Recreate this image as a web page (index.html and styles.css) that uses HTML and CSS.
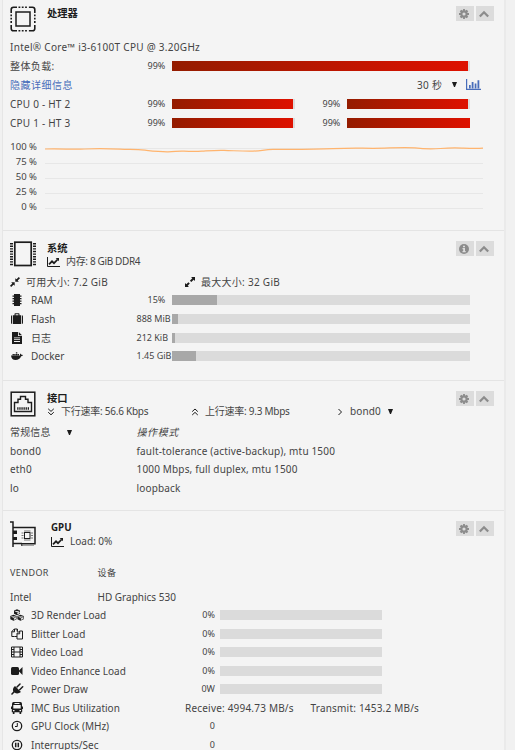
FILE: index.html
```html
<!DOCTYPE html>
<html lang="zh">
<head>
	<meta charset="utf-8">
	<title>Dashboard</title>
	<link rel="stylesheet" href="styles.css">
</head>
<body>
	<svg class="defs">
		<symbol id="cog" viewBox="0 0 12 12"><path fill-rule="evenodd" d="M4.900 0h2.200v1.500l1 .4 1.100-1.100 1.900 1.900L10 3.800l.4 1.100H12v2.200h-1.600L10 8.200l1.100 1.100-1.900 1.900-1.100-1.100-1 .4V12H4.900v-1.500l-1-.4-1.100 1.100L.9 9.300 2 8.200l-.4-1.100H0V4.900h1.600L2 3.800.9 2.700 2.800.8l1.100 1.100 1-.4zM6 4.100a1.900 1.900 0 1 0 0 3.800 1.900 1.900 0 0 0 0-3.800z"/></symbol>
		<symbol id="up" viewBox="0 0 10 10"><path d="M.8 7.500 5 3.300l4.200 4.200" fill="none" stroke="currentColor" stroke-width="2.300"/></symbol>
		<symbol id="info" viewBox="0 0 10 10"><circle cx="5" cy="5" r="5"/><path d="M4 1.700h2v1.500H4zM3.500 4H6v3h.7v1.200H3.500V7h.7V5.200h-.7z" fill="#dcdcdc"/></symbol>
		<symbol id="line-chart" viewBox="0 0 13 10"><path d="M.5 0v9.500H13" fill="none" stroke="currentColor"/><path d="M2 7.300 5 4.300l2 1.900 3.600-3.700" fill="none" stroke="currentColor" stroke-width="1.700"/><path d="M8.700 1H12v3.300z"/></symbol>
	</svg>

	<div class="panel">
		<section class="cpu">
			<div class="head">
				<svg class="logo" viewBox="0 0 26 26"><rect x="6" y="6" width="14" height="14" fill="none" stroke="currentColor" stroke-width="1.500"/><path d="M1.200 7V3.500q0-2.300 2.300-2.300H7M19 1.200h3.500q2.300 0 2.300 2.300V7M24.800 19v3.500q0 2.300-2.300 2.300H19M7 24.800H3.500q-2.300 0-2.300-2.300V19" fill="none" stroke="currentColor" stroke-width="1.600"/><path d="M8.500 1.200h10M8.500 24.800h10M1.200 8.500v10M24.800 8.500v10" fill="none" stroke="currentColor" stroke-width="1.600" stroke-dasharray="1.800 1.500"/></svg>
				<div class="titles"><h2>处理器</h2></div>
				<div class="tools"><span><svg><use href="#cog"/></svg></span><span><svg><use href="#up"/></svg></span></div>
			</div>
			<div class="row model">Intel® Core™ i3-6100T CPU @ 3.20GHz</div>
			<div class="row load"><span>整体负载:</span><em>99%</em><div class="bar"><i class="red" style="width:99.300%"></i></div></div>
			<div class="row detail"><a>隐藏详细信息</a><span class="time">30 秒</span><b class="caret"></b>
				<svg class="bars" viewBox="0 0 15 11"><path d="M.6 0v10.400H15" fill="none" stroke="currentColor" stroke-width="1.200"/><path d="M3 6h1.700v3.500H3zM5.700 3h1.800v6.500H5.700zM8.700 4.500h1.700v5H8.700zM11.500 1.200h1.800v8.300h-1.800z"/></svg>
			</div>
			<div class="row core"><span>CPU 0 - HT 2</span><em>99%</em><div class="bar"><i class="red" style="width:98.500%"></i></div><em>99%</em><div class="bar"><i class="red" style="width:98.500%"></i></div></div>
			<div class="row core"><span>CPU 1 - HT 3</span><em>99%</em><div class="bar"><i class="red" style="width:98.500%"></i></div><em>99%</em><div class="bar"><i class="red" style="width:100%"></i></div></div>
			<div class="chart">
				<div class="labels"><span>100 %</span><span>75 %</span><span>50 %</span><span>25 %</span><span>0 %</span></div>
				<svg viewBox="0 0 438 64"><path d="M0 1.500h438M0 16.500h438M0 31.500h438M0 46.500h438M0 61.500h438" stroke="#e7e7e7" fill="none"/><path d="M0 2C20 1.500 25 2.700 40 2S65 1.700 75 2.200s15-.1 25 1 15 1.700 23 1.600 8-.8 16-.6 10 .5 18 0 13-1 22-.8 15 .8 26 .8 13-1.600 23-1.800c25 0 40 .2 60-.7s25-.4 40-.4 28-1.200 42-.4c8 1 15 1.400 25.500.6s15-.7 21.500-.4 15 .8 22-.1" stroke="#ffb46e" stroke-width="1.200" fill="none"/></svg>
			</div>
		</section>

		<section class="system">
			<div class="head">
				<svg class="logo" viewBox="0 0 26 26"><rect x="4.800" y="1.200" width="16.400" height="23.300" fill="none" stroke="currentColor" stroke-width="1.700"/><path d="M1.500 2v22.500M24.500 2v22.500" stroke="currentColor" stroke-width="3" stroke-dasharray="1.400 1.200"/></svg>
				<div class="titles"><h2>系统</h2><p><svg class="lc"><use href="#line-chart"/></svg>内存: 8 GiB DDR4</p></div>
				<div class="tools"><span><svg><use href="#info"/></svg></span><span><svg><use href="#up"/></svg></span></div>
			</div>
			<div class="row sizes">
				<svg viewBox="0 0 10 10"><path d="M5.300 4.700V1.200l1.200 1.100L8.800 0 10 1.200 7.700 3.500l1.100 1.200zM4.700 5.300v3.500L3.500 7.700 1.200 10 0 8.800l2.300-2.300-1.100-1.200z"/></svg><span>可用大小: 7.2 GiB</span>
				<svg viewBox="0 0 10 10"><path d="M6 0h4v4L8.700 2.700 6.300 5.100 4.900 3.700l2.400-2.400zM4 10H0V6l1.300 1.300 2.100-2.100 1.400 1.400-2.100 2.100z"/></svg><span>最大大小: 32 GiB</span>
			</div>
			<div class="row use"><svg viewBox="0 0 12 12"><path d="M3 0h6v12H3zM1.500 1.500h9v1.300h-9zM1.500 4h9v1.300h-9zM1.500 6.500h9v1.300h-9zM1.500 9h9v1.300h-9z"/></svg><span>RAM</span><em class="pct">15%</em><div class="bar"><i style="width:15%"></i></div></div>
			<div class="row use"><svg viewBox="0 0 12 12"><path d="M0 3.500Q0 2.300 1.200 2.300V11Q0 11 0 9.800zM10.800 2.300Q12 2.300 12 3.500v6.300Q12 11 10.800 11zM2 2.300h1.500V1q0-.8.8-.8h3.400q.8 0 .8.800v1.300H10V11H2zM4.600 1.300v1h2.800v-1z"/></svg><span>Flash</span><em>888 MiB</em><div class="bar"><i style="width:2%"></i></div></div>
			<div class="row use"><svg viewBox="0 0 12 12"><path fill-rule="evenodd" d="M1 0h6v4h4v8H1zM3 5.500v.8h6v-.8zM3 7.300v.8h6v-.8zM3 9.100v.8h6v-.8zM7.800 0 11 3.200H7.800z"/></svg><span>日志</span><em>212 KiB</em><div class="bar"><i style="width:1%"></i></div></div>
			<div class="row use"><svg viewBox="0 0 12 12"><path d="M0 5.500h9q-.3-1.200.5-2 .7.500.8 1.300 1-.2 1.700.2-.6 1.200-1.900 1.200Q8.600 10 4.500 10 .6 10 0 5.500zM1.500 4h1.400v1.200H1.500zM3.200 4h1.400v1.200H3.200zM4.900 4h1.400v1.200H4.900zM6.600 4H8v1.200H6.600zM4.900 2.300h1.400v1.300H4.900z"/></svg><span>Docker</span><em>1.45 GiB</em><div class="bar"><i style="width:8%"></i></div></div>
		</section>

		<section class="network">
			<div class="head">
				<svg class="logo" viewBox="0 0 26 26"><rect x="1.200" y="1.200" width="23.600" height="23.600" fill="none" stroke="currentColor" stroke-width="1.500"/><path d="M4.500 20.500v-9H8V8.300h2.500V5.500h5v2.800H18v3.200h3.500v9z" fill="none" stroke="currentColor" stroke-width="1.400"/><path d="M7.200 17.500h12" stroke="currentColor" stroke-width="2.600" stroke-dasharray="1.300 .8"/></svg>
				<div class="titles"><h2>接口</h2><p class="rates"><svg viewBox="0 0 8 8"><path d="M1.200.8 4 3.400 6.800.8M1.200 4.200 4 6.800l2.800-2.600" fill="none" stroke="currentColor"/></svg><span>下行速率: 56.6 Kbps</span><svg viewBox="0 0 8 8"><path d="M1.200 3.600 4 1l2.800 2.600M1.200 7 4 4.400 6.800 7" fill="none" stroke="currentColor"/></svg><span>上行速率: 9.3 Mbps</span><svg viewBox="0 0 8 8"><path d="M2.500 1 5.500 4l-3 3" fill="none" stroke="currentColor"/></svg><span>bond0</span><b class="caret"></b></p></div>
				<div class="tools"><span><svg><use href="#cog"/></svg></span><span><svg><use href="#up"/></svg></span></div>
			</div>
			<div class="row net"><span>常规信息<b class="caret"></b></span><span class="mode">操作模式</span></div>
			<div class="row net"><span>bond0</span><span>fault-tolerance (active-backup), mtu 1500</span></div>
			<div class="row net"><span>eth0</span><span>1000 Mbps, full duplex, mtu 1500</span></div>
			<div class="row net"><span>lo</span><span>loopback</span></div>
		</section>

		<section class="gpu">
			<div class="head">
				<svg class="logo" viewBox="0 0 26 26"><path d="M0 1h3v25M3 6.500h22v16.300h-13V25M3 22.500h9" fill="none" stroke="currentColor" stroke-width="1.500"/><path d="M3 9.500h4V13H3zM3 16h4v3H3z"/><path d="M12 24h12" stroke="#888" stroke-width="1.500"/><rect x="14.500" y="11.500" width="5.500" height="6" fill="none" stroke="currentColor"/><path d="M11.500 12h2M11.500 14.500h2M11.500 17h2M21 12h2M21 14.500h2M21 17h2M14 10h6.500M14 19h6.500" stroke="#666" stroke-width=".9"/></svg>
				<div class="titles"><h2>GPU</h2><p><svg class="lc"><use href="#line-chart"/></svg>Load: 0%</p></div>
				<div class="tools"><span><svg><use href="#cog"/></svg></span><span><svg><use href="#up"/></svg></span></div>
			</div>
			<div class="row dev vendor"><span>VENDOR</span><span class="cn">设备</span></div>
			<div class="row dev"><span>Intel</span><span>HD Graphics 530</span></div>
			<div class="row meter"><svg viewBox="0 0 14 12"><path d="M7 .3 10 1.600v3.200L7 6.200 4 4.800V1.600zM3.500 5.700l3.100 1.400v3.200l-3.100 1.500-3.200-1.500V7.100zM10.500 5.700l3.200 1.400v3.200l-3.200 1.500-3.100-1.500V7.100z"/><path d="m4.800 2 2.200.9L9.200 2M1.200 7.500l2.300 1 2.300-1M8.200 7.500l2.300 1 2.300-1M7.600 5V3.700L9.300 3v1.200zM4.200 10.600V9.300l1.700-.7v1.200zM11.200 10.600V9.300l1.700-.7v1.200z" fill="#f4f4f4" stroke="#f4f4f4" stroke-width=".5"/></svg><span>3D Render Load</span><em>0%</em><div class="bar"></div></div>
			<div class="row meter"><svg viewBox="0 0 14 12"><path d="M4.500 8.500H1.800v-5L4.300 1h3v2M4.500 1v2.800H1.800M7 5.500 9.500 3h3v8H7zM9.700 3v2.800H7M4.500 8.500H7M7.300 1v3" fill="none" stroke="currentColor" stroke-width="1"/></svg><span>Blitter Load</span><em>0%</em><div class="bar"></div></div>
			<div class="row meter"><svg viewBox="0 0 14 12"><path d="M1.500 1h11v10h-11zM4 1v10M10 1v10M4 6h6M1.500 3.500H4M1.500 6H4M1.500 8.500H4M10 3.500h2.500M10 6h2.500M10 8.500h2.500" fill="none" stroke="currentColor" stroke-width="1"/></svg><span>Video Load</span><em>0%</em><div class="bar"></div></div>
			<div class="row meter"><svg viewBox="0 0 14 12"><rect x="1" y="2" width="8" height="8" rx="1.500"/><path d="M8.500 6 12.500 2v8z"/></svg><span>Video Enhance Load</span><em>0%</em><div class="bar"></div></div>
			<div class="row meter"><svg viewBox="0 0 14 12"><path d="m5 3 6 6Q7.500 11.500 4.500 9.500L2 12 1 11l2.300-2.500Q2 5.500 5 3z"/><path d="m7 4 3-3M9.700 6.700l3-3" stroke="currentColor" stroke-width="1.500" stroke-linecap="round"/></svg><span>Power Draw</span><em>0W</em><div class="bar"></div></div>
			<div class="row meter bus"><svg viewBox="0 0 14 12"><path fill-rule="evenodd" d="M3.500 0h7Q12 0 12 2v2.500h1V7h-.8v3.200h-1V12H9.500v-1.800h-5V12H2.800v-1.800h-1V7H1V4.500h1V2Q2 0 3.500 0zM4.500 1v1h5V1zM3.300 3v3.500h7.400V3zM3 8v1.200h1.500V8zM9.500 8v1.200H11V8z"/></svg><span>IMC Bus Utilization</span><span class="rate">Receive: 4994.73 MB/s</span><span class="rate">Transmit: 1453.2 MB/s</span></div>
			<div class="row meter"><svg viewBox="0 0 14 12"><circle cx="7" cy="6" r="4.700" fill="none" stroke="currentColor" stroke-width="1.300"/><path d="M7.300 3v3.500H5" fill="none" stroke="currentColor"/></svg><span>GPU Clock (MHz)</span><em>0</em></div>
			<div class="row meter"><svg viewBox="0 0 14 12"><circle cx="7" cy="6" r="4.700" fill="none" stroke="currentColor" stroke-width="1.300"/><path d="M5.700 3.800v4.400M8.300 3.800v4.400" stroke="currentColor" stroke-width="1.500"/></svg><span>Interrupts/Sec</span><em>0</em></div>
		</section>
	</div>
</body>
</html>
```

FILE: styles.css
```css
* {
	box-sizing: border-box;
}
body {
	margin: 0;
	height: 750px;
	overflow: hidden;
	background: #f1f1f1;
	color: #444;
	font: 10px/12px "Noto Sans", "Noto Sans CJK SC", sans-serif;
}
svg {
	display: block;
	fill: currentColor;
	color: #1c1c1c;
}
.defs {
	display: none;
}
.panel {
	width: 504px;
	height: 750px;
	margin-left: 2px;
	overflow: hidden;
	background: #f4f4f4;
	border-left: 1px solid #e6e6e6;
	border-right: 2px solid #eaeaea;
}
section {
	padding-left: 7px;
	border-top: 1px solid #e4e4e4;
}
.cpu {
	height: 230px;
	border-top: none;
}
.system {
	height: 150px;
}
.network {
	height: 130px;
}
.head {
	display: flex;
	height: 42px;
	padding-top: 10px;
}
.cpu .head {
	height: 37px;
	padding-top: 6px;
}
.network .head {
	height: 41.5px;
}
.logo {
	width: 26px;
	height: 26px;
}
.titles {
	flex: 1;
	padding-left: 11px;
}
h2 {
	margin: 0;
	color: #1c1c1c;
	font-size: 10.3px;
	font-weight: bold;
	line-height: 14px;
}
.titles p {
	display: flex;
	align-items: center;
	margin: 0;
	line-height: 13px;
	white-space: nowrap;
}
.system .titles p {
	letter-spacing: -.35px;
}
.lc {
	width: 13px;
	height: 10px;
	margin-right: 6px;
}
.tools {
	display: flex;
	gap: 2px;
	padding-right: 10px;
}
.tools span {
	display: flex;
	align-items: center;
	justify-content: center;
	width: 18px;
	height: 15px;
	background: #dcdcdc;
}
.tools svg {
	width: 10px;
	height: 10px;
	margin-right: 2px;
	color: #8c8c8c;
}
.row {
	display: grid;
	align-items: center;
	height: 18.7px;
	white-space: nowrap;
}
.cpu .row {
	height: 19px;
}
.gpu .row {
	height: 18.5px;
}
em {
	font-size: 9px;
	font-style: normal;
}
.bar {
	height: 10px;
	background: #dbdbdb;
}
.bar i {
	display: block;
	height: 10px;
	background: #a8a8a8;
}
.bar .red {
	background: linear-gradient(90deg, #941c00, #de1100);
}
.caret {
	display: inline-block;
	flex: none;
	width: 5px;
	border: 2.5px solid transparent;
	border-top: 5px solid #1c1c1c;
	border-bottom: 0;
}
.model {
	letter-spacing: .28px;
}
.load {
	grid-template-columns: 137.5px 24.5px 298px;
}
.load span {
	letter-spacing: .4px;
}
.detail {
	grid-template-columns: 407px 35px 14px 15px;
}
.detail a {
	color: #486dba;
	letter-spacing: .5px;
}
.time {
	letter-spacing: .3px;
}
.bars {
	width: 15px;
	height: 11px;
	color: #486dba;
}
.core {
	grid-template-columns: 137.5px 24.5px 123px 27.5px 24.5px 123px;
}
.core span {
	letter-spacing: .22px;
}
.core .bar:nth-child(3) {
	grid-column: 3;
}
.core em:nth-child(4) {
	grid-column: 5;
}
.chart {
	display: flex;
	padding-top: 7px;
}
.labels {
	width: 27px;
	text-align: right;
	font-size: 9.5px;
}
.labels span {
	display: block;
	height: 15px;
	line-height: 15px;
}
.chart svg {
	width: 438px;
	height: 64px;
	margin: 8px 0 0 7.5px;
}
.sizes {
	grid-template-columns: 16px 159px 16px 100px;
	letter-spacing: .28px;
}
.system .sizes {
	height: 17.8px;
}
.sizes svg {
	width: 10px;
	height: 10px;
}
.use {
	grid-template-columns: 21px 105.5px 35.5px 298px;
}
.use svg {
	width: 12px;
	height: 12px;
	margin-left: 1px;
}
.pct {
	padding-left: 11px;
}
.rates {
	letter-spacing: -.25px;
}
.rates svg {
	width: 8px;
	height: 8px;
	margin-right: 6px;
}
.rates span:nth-of-type(1) {
	width: 130px;
}
.rates span:nth-of-type(2) {
	width: 131px;
}
.rates span:nth-of-type(3) {
	width: 38px;
	letter-spacing: .1px;
}
.net {
	grid-template-columns: 126.5px 1fr;
	letter-spacing: .16px;
}
.net .caret {
	margin: 0 0 1px 16px;
}
.mode {
	font-style: italic;
	letter-spacing: .6px;
}
.gpu .titles {
	padding-left: 15px;
}
.gpu h2 {
	font-size: 9.8px;
}
.gpu .vendor {
	height: 34.3px;
	padding-top: 5px;
	font-size: 9px;
	letter-spacing: .4px;
}
.dev {
	grid-template-columns: 87.5px 1fr;
}
.meter {
	grid-template-columns: 21px 154px 30px 5px 162px;
}
.meter svg {
	width: 14px;
	height: 12px;
}
.meter em {
	text-align: right;
}
.meter .bar {
	grid-column: 5;
}
.meter.bus {
	grid-template-columns: 21px 154px 125.5px 1fr;
}
.rate {
	letter-spacing: .2px;
}
```
